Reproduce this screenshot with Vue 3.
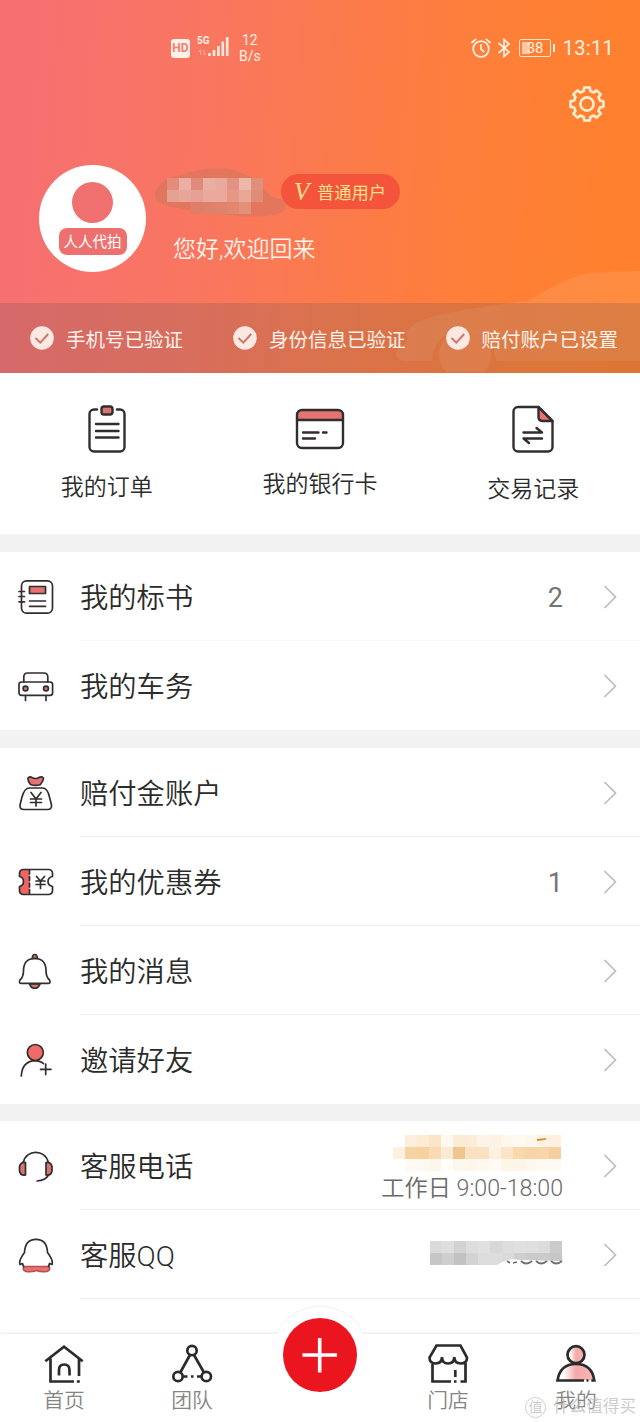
<template>
  <div class="page">
    <header class="hero">
      <svg class="hero-car" viewBox="0 0 250 104" width="250" height="104">
        <path
          fill="#fff"
          fill-opacity="0.09"
          d="M12 92C2 88 6 80 14 76Q20 70 16 64C22 52 45 46 64 43C90 38 118 34 138 32C158 20 178 7 202 4Q226 2 250 2V92H106A29 29 0 1 0 42 92Z"
        />
        <path fill="#fff" fill-opacity="0.09" d="M56 103A26 26 0 1 1 94 103Z" />
      </svg>

      <div class="status-bar">
        <span class="hd">HD</span>
        <div class="signal">
          <span class="net">5G</span>
          <svg viewBox="0 0 32 22" width="32" height="22">
            <path stroke="#ffe9dc" stroke-width="2.6" d="M12.5 21v-3M17 21v-6M21.4 21V11M25.8 21V6.5M30.2 21V2" />
            <path
              stroke="#ffe9dc"
              stroke-opacity="0.5"
              fill="none"
              d="M3.5 20v-5l-2 2M7 15v5l2-2"
            />
          </svg>
        </div>
        <div class="speed">
          <span>12</span>
          <span>B/s</span>
        </div>
        <div class="status-right">
          <svg class="alarm" viewBox="0 0 20 20" width="20" height="20">
            <g fill="none" stroke="#fff0e2" stroke-width="1.8" stroke-linecap="round">
              <circle cx="10" cy="11" r="7.8" />
              <path d="M10 6.8V11l2.8 2.6M1 4.5L4.6 1.4M19 4.5L15.4 1.4" />
            </g>
          </svg>
          <svg class="bluetooth" viewBox="0 0 14 20" width="14" height="20">
            <path
              fill="none"
              stroke="#fff0e2"
              stroke-width="1.7"
              d="M1.5 5L12 14L7 18.5V1.5L12 6L1.500 15"
            />
          </svg>
          <span class="battery"><i></i><b>38</b></span>
          <span class="clock">13:11</span>
        </div>
      </div>

      <div class="toolbar">
        <svg viewBox="0 0 36 36" width="36" height="36">
          <g fill="none" stroke="#ffedd0" stroke-width="2.6" stroke-linejoin="round">
            <path :d="gearPath" />
            <circle cx="18" cy="18" r="6.6" />
          </g>
        </svg>
      </div>

      <div class="profile">
        <div class="avatar">
          <span class="avatar-head"></span>
          <span class="avatar-name">人人代拍</span>
        </div>
        <div class="who">
          <div class="name-line">
            <svg class="smudge" viewBox="0 0 134 56" width="134" height="56">
              <path
                fill="#dd765e"
                fill-opacity="0.8"
                d="M2 28Q8 14 28 11Q52 2 76 5Q96 9 108 22Q116 34 131 36Q138 48 120 51Q100 54 76 51Q44 48 14 42Q0 38 2 28Z"
              />
              <rect
                v-for="(c, i) in nameMosaic"
                :key="i"
                :x="14 + (i % 8) * 12"
                :y="14 + Math.floor(i / 8) * 12"
                width="12"
                height="12"
                :fill="c"
              />
            </svg>
            <span class="level"><em>V</em><span>普通用户</span></span>
          </div>
          <p class="greeting">您好,欢迎回来</p>
        </div>
      </div>

      <ul class="verified">
        <li v-for="text in verified" :key="text">
          <svg viewBox="0 0 24 24" width="24" height="24">
            <circle cx="12" cy="12" r="11.8" fill="#fde8e2" />
            <path fill="none" stroke="#c9786a" stroke-width="2" d="M5.5 12l4.8 4.6L18.2 8" />
          </svg>
          <span>{{ text }}</span>
        </li>
      </ul>
    </header>

    <nav class="shortcuts">
      <a v-for="s in shortcuts" :key="s.label" :class="['shortcut', s.name]">
        <svg class="line-icon" viewBox="0 0 50 50" width="50" height="50" v-html="s.icon"></svg>
        <span>{{ s.label }}</span>
      </a>
    </nav>

    <section v-for="(group, g) in groups" :key="g" class="group">
      <div v-for="row in group" :key="row.label" class="row">
        <svg class="line-icon row-icon" viewBox="0 0 36 36" width="36" height="36" v-html="row.icon"></svg>
        <div class="row-body">
          <span class="row-label">{{ row.label }}</span>
          <span v-if="row.count" class="count">{{ row.count }}</span>
          <div v-if="row.hours" class="phone">
            <svg viewBox="0 0 180 38" width="180" height="38">
              <rect
                v-for="(c, i) in phoneMosaic"
                :key="i"
                :x="10 + (i % 14) * 12"
                :y="Math.floor(i / 14) * 12"
                width="12"
                height="12"
                :fill="c"
              />
              <path fill="#d98e2e" d="M154 4l10-1-2 2-8 1z" />
            </svg>
            <span>{{ row.hours }}</span>
          </div>
          <svg v-if="row.masked" class="qq-number" viewBox="0 0 134 26" width="134" height="26">
            <rect
              v-for="(c, i) in qqMosaic"
              :key="i"
              :x="1 + (i % 11) * 12"
              :y="Math.floor(i / 11) * 12"
              width="12"
              height="12"
              :fill="c"
            />
            <path fill="#fff" d="M68 24q12-8 22-5l43 1v4z" />
            <path
              fill="none"
              stroke="#707070"
              stroke-width="1.8"
              d="M78 20l3 2M84 22l4-1M92 20q5 5 11 0M107 20q5 5 11 0M122 20q5 5 11 0"
            />
          </svg>
          <svg class="arrow" viewBox="0 0 14 24" width="14" height="24">
            <path fill="none" stroke="#bdbdbd" stroke-width="1.7" d="M1.5 1L12.5 12L1.5 23" />
          </svg>
        </div>
      </div>
    </section>

    <footer class="tabbar">
      <a v-for="tab in tabs" :key="tab.name" class="tab">
        <template v-if="tab.icon">
          <svg class="tab-icon" viewBox="0 0 42 42" width="42" height="42" v-html="tab.icon"></svg>
          <span>{{ tab.label }}</span>
        </template>
        <div v-else class="add">
          <svg viewBox="0 0 96 96" width="96" height="96">
            <circle cx="48" cy="48" r="37" fill="#ea151f" />
            <path stroke="#fff" stroke-width="3.6" d="M30.5 48H65M47.7 31v34.5" />
          </svg>
        </div>
      </a>
      <div class="watermark"><i>值</i>什么值得买</div>
    </footer>
  </div>
</template>

<script setup>
import { ref } from "vue";

const verified = ref(["手机号已验证", "身份信息已验证", "赔付账户已设置"]);

const shortcuts = [
  {
    name: "orders",
    label: "我的订单",
    icon: `<path d="M15 5.5h-3a4.5 4.5 0 0 0-4.5 4.5v33a4.5 4.5 0 0 0 4.5 4.5h26a4.5 4.5 0 0 0 4.5-4.5V10a4.5 4.5 0 0 0-4.5-4.5h-3M14 20h22.500M14 27h22.500M14 33.500h22.500"/>
      <rect x="19.5" y="2.5" width="11" height="8" rx="2.5" fill="#d87472"/>`,
  },
  {
    name: "cards",
    label: "我的银行卡",
    icon: `<path stroke="none" fill="#e57373" d="M2 16V10q0-4 4-4h38q4 0 4 4v6z"/>
      <rect x="2" y="6" width="46" height="38" rx="5"/><path d="M2 16h46M8 28.5h15.5M28 28.5h3.5M8 34.5h12"/>`,
  },
  {
    name: "records",
    label: "交易记录",
    icon: `<path fill="#e57373" d="M30.5 3v10q0 4 4 4H44.5z"/>
      <path d="M30.5 3H10a4.5 4.5 0 0 0-4.5 4.5V43a4.5 4.5 0 0 0 4.5 4.5h30a4.5 4.5 0 0 0 4.5-4.5V17L30.5 3M15.5 28.500h18.5l-5.500-4.500M34 34.500H15.500l5.500 4.500"/>`,
  },
];

const groups = [
  [
    {
      label: "我的标书",
      count: "2",
      icon: `<rect x="3.5" y="1.8" width="31" height="32.4" rx="5"/>
        <rect x="11.5" y="7.5" width="16" height="7" fill="#e57373"/>
        <path d="M11.5 22h16M11.5 27.3h16M1 12.5h5.5M1 17.5h5.5M1 22.8h5.5"/>`,
    },
    {
      label: "我的车务",
      icon: `<path d="M5.8 14V9q0-4 4-4h16q4 0 4 4v5M7.5 28.5v4M28 28.5v4"/>
        <rect x="1" y="14" width="33.6" height="13.3" rx="2.5"/>
        <circle cx="7.5" cy="20.5" r="2.4" fill="#d87472"/><circle cx="28" cy="20.5" r="2.4" fill="#d87472"/>`,
    },
  ],
  [
    {
      label: "赔付金账户",
      icon: `<path fill="#e57373" d="M10 3q2-2 4-.5q3.5 2 7 0q2.500-1.500 4.500.5q0 3-3 6.500q-5 1.800-10 0Q9.500 6 10 3z"/>
        <path d="M11.5 13h13q5 0 7 9l2 8q.5 4.500-4 4.500H6q-4.500 0-4-4.500l2-8q2.500-9 7.500-9zM13 17.500l5 6.500l5-6.500M12.500 24h11M12.500 27.500h11M18 24v7"/>`,
    },
    {
      label: "我的优惠券",
      count: "1",
      icon: `<path fill="#f06464" stroke="none" d="M11.5 5.5H4.5q-3 1-3 4v3q4 1 4 5t-4 5v4q0 3 3 4h7z"/>
        <path d="M11.5 5.5H5q-3.500.5-3.500 4v3q4 1 4 5t-4 5v4q0 3.500 3.500 4h26q3.500-.5 3.500-4v-4q-4.500-1-4.500-5t4.500-5v-3q0-3.500-3.500-4z"/>
        <path stroke-dasharray="4 2.5" d="M11.5 6v24"/><path d="M18.5 12.5l4 4.500l4-4.500M18 17h9M18 20.500h9M22.500 17v7.500"/>`,
    },
    {
      label: "我的消息",
      icon: `<path fill="#d87472" d="M11.5 31q1.500 4.300 5.200 4.300T22 31zM14.300 5.500q0-4 2.500-4t2.500 4z"/>
        <path d="M16.8 5.5q-11 0-11.300 12q0 6.500-3.500 9.500q-1.500 3.300 1 3.300h27.500q2.500 0 1-3.300q-3.500-3-3.500-9.500q-.3-12-11.200-12z"/>`,
    },
    {
      label: "邀请好友",
      icon: `<path d="M3.3 34Q4 20 16 18.6q6 0 9.500 3M27.700 22v10.500M22.500 27.300H33"/><circle cx="17.3" cy="10.5" r="8" fill="#f06a68"/>`,
    },
  ],
  [
    {
      label: "客服电话",
      hours: "工作日 9:00-18:00",
      icon: `<path d="M5.3 14.5C8 1 27.5 1 30.3 14.5M30.5 27q-3 5.5-11.500 6"/>
        <path fill="#d87472" d="M7.5 14.5v12.500q-5 1-6-4v-4.500q1-4.500 6-4zM28 14.500v12.500q5 1 6-4v-4.500q-1-4.500-6-4z"/>`,
    },
    {
      label: "客服QQ",
      masked: true,
      icon: `<path fill="#e57373" stroke="#b25252" d="M6 29.5h25q2 3.500-2 5q-6 .8-10.500-1q-5 1.800-10.500 1q-4-1.500-2-5z"/>
        <path d="M5.5 29.5l-1-3l-2.500 1q-1.500-4 4.500-12Q7 2.300 18 2.300T29.500 15.500q6 8 4.500 12l-2.500-1l-1 3"/>`,
    },
  ],
];

const tabs = [
  {
    name: "home",
    label: "首页",
    icon: `<path d="M2.3 18.3L21 3.8l18.7 14.5M7.5 15.5v23h23.5M33.8 38.5h3M36 16v17M16 32.5V27q0-5.500 5.200-5.500T26.500 27v5.500"/>`,
  },
  {
    name: "team",
    label: "团队",
    icon: `<path d="M19 12L9.5 29M23 12l9.7 17M12.5 33.5h4M20 33.5h2.5M26 33.5h4"/>
      <circle cx="21" cy="7.5" r="4.7"/><circle cx="7" cy="33.5" r="4.7"/><circle cx="35.3" cy="33.5" r="4.7"/>`,
  },
  { name: "add" },
  {
    name: "shop",
    label: "门店",
    icon: `<path d="M5.5 20v18.5H24M27 38.5h2.500M33.500 38.500h5V20M28.300 27v7M9.500 2.500h24L40 14.500q0 6-6.300 6T27.300 14q0 6.500-6.200 6.500T15 14q0 6.500-6.200 6.500T2.500 14.500z"/>`,
  },
  {
    name: "mine",
    label: "我的",
    icon: `<defs><linearGradient id="blush"><stop offset="0.15" stop-color="#fff"/><stop offset="0.5" stop-color="#f5a9a9"/><stop offset="1" stop-color="#f7b5b5"/></linearGradient></defs>
      <path stroke="none" fill="url(#blush)" d="M3 37Q5 21 21 21t18 16z"/><circle cx="21" cy="11.7" r="8.5" fill="url(#blush)"/>
      <path d="M29 37.5H2.5Q5 21 21 21t18.300 16.500h-3M31.500 37.500h2"/>`,
  },
];

// 八齿齿轮轮廓
const gearPath = (() => {
  const points = [];
  for (let i = 0; i < 8; i++) {
    [[-14, 13.4], [-10, 16.7], [10, 16.7], [14, 13.4]].forEach(([deg, r]) => {
      const a = ((i * 45 + deg) * Math.PI) / 180;
      points.push(`${(18 + r * Math.sin(a)).toFixed(2)} ${(18 - r * Math.cos(a)).toFixed(2)}`);
    });
  }
  return `M${points.join("L")}Z`;
})();

// 打码色块
const nameMosaic = [
  "#e28c7c", "#eab0a6", "#e08a7a", "#ebaea2", "#e9aa9d", "#e29381", "#edb8a9", "#e0907a",
  "#e5a191", "#e8a69a", "#e7a092", "#e9aa9c", "#eba99a", "#e59885", "#e9a894", "#df8d76",
  "none", "none", "#de7d68", "#df806a", "#e0836c", "#e0876e", "#e29078", "none",
];
const phoneMosaic = [
  "none", "#fbeedd", "#fdebd2", "#fbe4c8", "#fff9f1", "#fcebd7", "#fcecd8", "#fdf4e7", "#fdf2e5", "#fef7ec", "#fef9f1", "#fef7ec", "#fdf2e3", "#fdf0df",
  "#fdf1df", "#f7d3a2", "#f7d2a0", "#f8dbb5", "#fcebd3", "#f0c58e", "#fae1c1", "#fae1c1", "#fdf1df", "#fbe4c8", "#f8d8ac", "#f7d5a8", "#f8d6aa", "#f6cfa0",
  "none", "#fffaf2", "#fdf9f0", "#fcf6ec", "#fffdf8", "#fcf8ef", "#fcf6eb", "#fef8ee", "#fffaf2", "#fdf5e8", "#fdf5e8", "#fdf7ed", "#fef9f1", "#fef9f1",
];
const qqMosaic = [
  "#dadada", "#dedede", "#d2d2d2", "#dddddd", "#e0e0e0", "#d8d8d8", "#dddddd", "#e0e0e0", "#dfdfdf", "#dcdcdc", "#cbcbcb",
  "#c6c6c6", "#cfcfcf", "#c2c2c2", "#d3d3d3", "#dddddd", "#dddddd", "#dadada", "#cfcfcf", "#cbcbcb", "#cbcbcb", "#c6c6c6",
];
</script>

<style>
body {
  margin: 0;
  background: #fff;
}
</style>

<style scoped>
.page {
  display: flex;
  flex-direction: column;
  width: 640px;
  height: 1422px;
  overflow: hidden;
  background: #fff;
  color: #2b2b2b;
  font-family: Roboto, "Noto Sans CJK SC", sans-serif;
}
.smudge rect,
.phone rect,
.qq-number rect {
  shape-rendering: crispEdges;
}
.hero {
  position: relative;
  display: flex;
  flex-direction: column;
  flex: none;
  height: 373px;
  background: linear-gradient(94deg, #f67072 3%, #f97660 32%, #fc7b4a 54%, #fe7f37 76%, #ff812c 100%);
}
.hero-car {
  position: absolute;
  right: 0;
  bottom: 0;
}
.status-bar {
  display: flex;
  align-items: center;
  height: 32px;
  padding: 32px 26px 0 171px;
  color: #fff0e4;
}
.hd {
  width: 19px;
  height: 19px;
  border-radius: 3px;
  background: #fff0ea;
  color: #f3806c;
  font-size: 12px;
  font-weight: 700;
  line-height: 19px;
  text-align: center;
}
.signal {
  position: relative;
  height: 22px;
  margin: -4px 0 0 7px;
}
.net {
  position: absolute;
  left: 0;
  top: 0;
  font-size: 10px;
  font-weight: 700;
  line-height: 12px;
}
.speed {
  display: flex;
  flex-direction: column;
  align-items: center;
  margin-left: 10px;
  font-size: 14px;
  line-height: 16px;
}
.status-right {
  display: flex;
  align-items: center;
  margin-left: auto;
}
.bluetooth {
  margin-left: 6px;
}
.battery {
  position: relative;
  display: flex;
  width: 30px;
  height: 16px;
  margin: 0 12px 0 8px;
  border: 1px solid #ffe3c8;
  border-radius: 2px;
}
.battery::after {
  content: "";
  position: absolute;
  right: -5px;
  top: 4px;
  width: 2px;
  height: 8px;
  background: #fff0e2;
}
.battery i {
  width: 8px;
  margin: 2px 0 2px 2px;
  background: #ffc7a0;
}
.battery b {
  margin-left: -3px;
  font-size: 15px;
  font-weight: 400;
  line-height: 16px;
}
.clock {
  font-size: 20px;
  letter-spacing: 0.3px;
}
.toolbar {
  display: flex;
  justify-content: flex-end;
  padding: 22px 35px 0 0;
}
.profile {
  display: flex;
  padding: 43px 0 0 39px;
}
.avatar {
  display: flex;
  flex-direction: column;
  align-items: center;
  flex: none;
  width: 107px;
  height: 107px;
  border-radius: 50%;
  background: #fff;
}
.avatar-head {
  width: 41px;
  height: 41px;
  margin-top: 17px;
  border-radius: 50%;
  background: #f0706f;
}
.avatar-name {
  box-sizing: border-box;
  width: 68px;
  height: 27px;
  margin-top: 5px;
  padding-top: 1px;
  border-radius: 8px;
  background: #ed706f;
  color: #fff;
  font-size: 14.5px;
  line-height: 27px;
  text-align: center;
}
.who {
  padding: 1px 0 0 7px;
}
.name-line {
  display: flex;
  align-items: center;
  height: 52px;
}
.level {
  display: flex;
  align-items: center;
  width: 119px;
  height: 35px;
  margin: -1px 0 0 -6px;
  border-radius: 18px;
  background: #f4543b;
  color: #ffe08c;
  font-size: 17.3px;
  z-index: 1;
}
.level em {
  width: 23px;
  margin-left: 13px;
  font: italic 400 25px "Liberation Serif", serif;
}
.greeting {
  margin: 15px 0 0 20px;
  color: #fff3ea;
  font-size: 23px;
  font-weight: 350;
  line-height: 34px;
}
.verified {
  position: relative;
  display: flex;
  align-items: center;
  height: 70px;
  margin: auto 0 0;
  padding: 0 0 0 30px;
  background: rgba(100, 84, 84, 0.22);
  list-style: none;
}
.verified li {
  display: flex;
  align-items: center;
  gap: 12px;
  color: #fff2ea;
  font-size: 19.5px;
}
.verified li:nth-child(2) {
  margin-left: 50px;
}
.verified li:nth-child(3) {
  margin-left: 40px;
}
.shortcuts {
  display: flex;
  flex: none;
  height: 161px;
}
.shortcut {
  display: flex;
  flex: 1;
  flex-direction: column;
  align-items: center;
  padding-top: 31px;
  font-size: 23px;
  font-weight: 350;
  line-height: 34px;
}
.shortcut span {
  margin-top: 17px;
}
.cards span {
  margin-top: 14px;
}
.records span {
  margin-top: 19px;
}
.line-icon {
  fill: none;
  stroke: #332e2e;
  stroke-width: 2;
  stroke-linecap: round;
  stroke-linejoin: round;
}
.shortcut .line-icon {
  stroke-width: 2.4;
}
.row-icon {
  flex: none;
  stroke-width: 1.7;
}
.group {
  flex: none;
  border-top: 18px solid #f2f2f2;
}
.group:nth-of-type(3) {
  border-top-width: 17px;
}
.row {
  display: flex;
  align-items: center;
  height: 89px;
  padding-left: 18px;
}
.row-body {
  display: flex;
  align-items: center;
  flex: 1;
  box-sizing: border-box;
  height: 89px;
  margin-left: 26px;
  padding: 1px 23px 0 0;
  border-bottom: 1px solid #f0f0f0;
}
.group:nth-of-type(1) .row-body {
  border-bottom-color: #f9f9f9;
}
.group:nth-of-type(-n + 2) .row:last-child .row-body {
  border-bottom-color: transparent;
}
.row-label {
  margin-right: auto;
  padding-top: 5px;
  font-size: 28.3px;
  font-weight: 350;
  line-height: 40px;
}
.count {
  padding-top: 3px;
  color: #757575;
  font-size: 27px;
}
.arrow {
  flex: none;
  margin-left: 40px;
}
.phone {
  display: flex;
  flex-direction: column;
  align-items: flex-end;
  color: #6a6a6a;
  font-size: 23.2px;
  font-weight: 350;
  line-height: 30px;
}
.phone svg {
  flex: none;
  margin-top: 7px;
}
.qq-number {
  margin-bottom: 1px;
}
.tabbar {
  position: relative;
  display: flex;
  height: 88px;
  margin-top: auto;
  background: #fff;
  box-shadow: 0 -1px 3px rgba(0, 0, 0, 0.09);
}
.tab {
  display: flex;
  flex: 1;
  flex-direction: column;
  align-items: center;
  padding-top: 9px;
  color: #858585;
  font-size: 20.8px;
  font-weight: 350;
  line-height: 32px;
}
.tab-icon {
  flex: none;
  fill: none;
  stroke: #2b2b2b;
  stroke-width: 2.7;
}
.add {
  height: 96px;
  margin-top: -36px;
  border-radius: 50%;
  background: #fff;
  box-shadow: 0 -1px 2px rgba(0, 0, 0, 0.06);
}
.add svg {
  display: block;
}
.watermark {
  position: absolute;
  right: 4px;
  bottom: 3px;
  display: flex;
  align-items: center;
  color: rgba(190, 190, 190, 0.8);
  font-size: 16.6px;
  line-height: 24px;
}
.watermark i {
  width: 19px;
  height: 19px;
  margin-right: 7px;
  border: 1px solid #cfcfcf;
  border-radius: 50%;
  font-size: 14px;
  font-style: normal;
  line-height: 18px;
  text-align: center;
}
</style>
